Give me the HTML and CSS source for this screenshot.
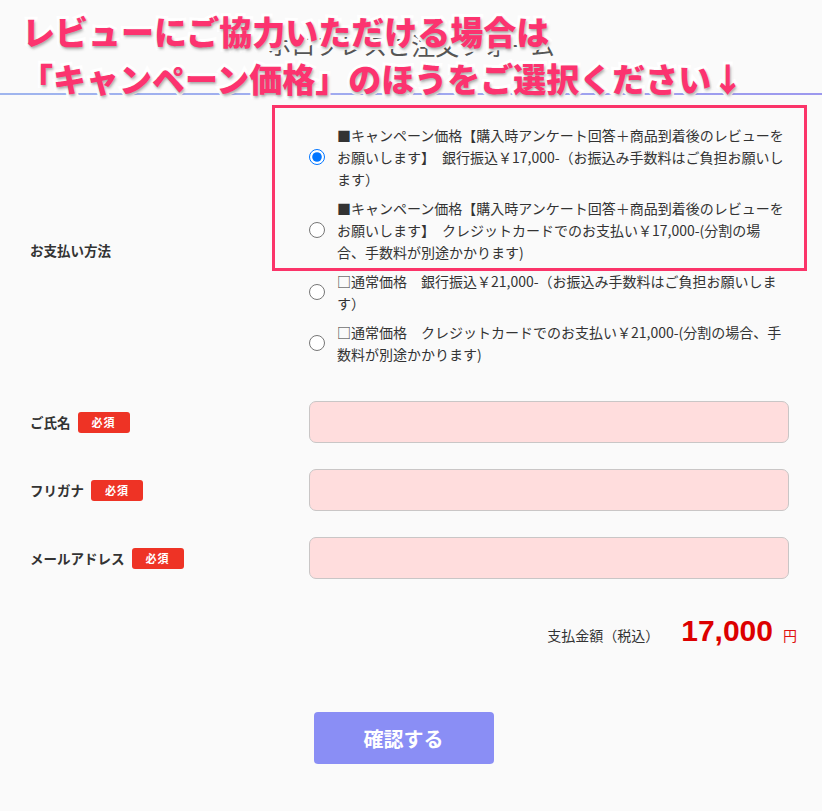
FILE: index.html
```html
<!DOCTYPE html>
<html lang="ja">
<head>
<meta charset="utf-8">
<title>ご注文フォーム</title>
<link rel="stylesheet" href="styles.css">
</head>
<body>
<div class="page">
  <header class="header">
    <h1 class="title">ホロフレスご注文フォーム</h1>
  </header>
  <div class="rule"></div>

  <form class="form">
    <div class="row row-pay">
      <div class="label label-pay">お支払い方法</div>
      <div class="options">
        <label class="opt"><input type="radio" name="pay" checked><span class="opt-text">■キャンペーン価格【購入時アンケート回答＋商品到着後のレビューをお願いします】　銀行振込￥17,000-（お振込み手数料はご負担お願いします）</span></label>
        <label class="opt"><input type="radio" name="pay"><span class="opt-text">■キャンペーン価格【購入時アンケート回答＋商品到着後のレビューをお願いします】　クレジットカードでのお支払い￥17,000-(分割の場合、手数料が別途かかります)</span></label>
        <label class="opt"><input type="radio" name="pay"><span class="opt-text">□通常価格　銀行振込￥21,000-（お振込み手数料はご負担お願いします）</span></label>
        <label class="opt"><input type="radio" name="pay"><span class="opt-text">□通常価格　クレジットカードでのお支払い￥21,000-(分割の場合、手数料が別途かかります)</span></label>
      </div>
    </div>

    <div class="row">
      <div class="label">ご氏名<span class="req">必須</span></div>
      <input class="field" type="text">
    </div>
    <div class="row">
      <div class="label">フリガナ<span class="req">必須</span></div>
      <input class="field" type="text">
    </div>
    <div class="row">
      <div class="label">メールアドレス<span class="req">必須</span></div>
      <input class="field" type="email">
    </div>

    <div class="total">
      <span class="total-label">支払金額（税込）</span>
      <span class="amount">17,000</span>
      <span class="yen">円</span>
    </div>

    <div class="actions">
      <button type="button" class="submit">確認する</button>
    </div>
  </form>

  <div class="highlight"></div>
  <div class="notice">
    <p class="notice-line notice-line1">レビューにご協力いただける場合は</p>
    <p class="notice-line notice-line2">「キャンペーン価格」のほうをご選択ください↓</p>
  </div>
</div>
</body>
</html>
```

FILE: styles.css
```css
* { box-sizing: border-box; }

html, body {
  margin: 0;
  padding: 0;
  background: #fafafa;
}

body {
  font-family: "Noto Sans CJK JP", "Noto Sans", sans-serif;
  color: #333;
}

.page {
  position: relative;
  width: 822px;
  min-height: 811px;
}

.header {
  height: 93px;
  padding-top: 30px;
}

.title {
  margin: 0;
  text-align: center;
  font-size: 24px;
  line-height: 30px;
  font-weight: 400;
  color: #555;
}

.rule {
  height: 2px;
  background: linear-gradient(90deg, #9fb5ee 0%, #a0a6f0 60%, #9c98ee 100%);
}

.form {
  padding: 29px 25px 0 30px;
}

.row {
  display: grid;
  grid-template-columns: 279px 480px;
  align-items: center;
  margin-bottom: 26px;
}

.row-pay {
  margin-bottom: 36px;
}

.label {
  display: flex;
  align-items: center;
  gap: 7px;
  font-size: 13.5px;
  font-weight: 700;
  color: #333;
  line-height: 20px;
}

.label-pay {
  padding-top: 11px;
}

.req {
  display: inline-flex;
  align-items: center;
  justify-content: center;
  width: 52px;
  height: 21px;
  border-radius: 3px;
  background: #ee3325;
  color: #fff;
  font-size: 11px;
  font-weight: 700;
  letter-spacing: 1px;
}

.options {
  display: flex;
  flex-direction: column;
  gap: 7px;
}

.opt {
  display: flex;
  align-items: center;
  gap: 12px;
  cursor: pointer;
}

.opt input {
  width: 16px;
  height: 16px;
  margin: 0;
  flex: none;
}

.opt-text {
  width: 448px;
  font-size: 14px;
  line-height: 22px;
  color: #333;
  line-break: strict;
}

.field {
  display: block;
  width: 480px;
  height: 42px;
  margin: 0;
  border: 1px solid #c9c6c6;
  border-radius: 7px;
  background: #ffdddd;
  font: inherit;
}

.total {
  display: flex;
  justify-content: flex-end;
  align-items: baseline;
  margin-top: 35px;
  height: 36px;
}

.total-label {
  font-size: 14px;
  color: #333;
}

.amount {
  margin-left: 22px;
  font-family: "Liberation Sans", "Noto Sans", sans-serif;
  font-size: 30px;
  font-weight: 700;
  color: #dc0000;
}

.yen {
  margin-left: 10px;
  font-size: 14px;
  color: #e01010;
}

.actions {
  display: flex;
  justify-content: center;
  padding-right: 20px;
  margin-top: 62px;
}

.submit {
  width: 180px;
  height: 52px;
  border: none;
  border-radius: 4px;
  background: #8a8ef5;
  color: #fff;
  font-family: inherit;
  font-size: 20px;
  font-weight: 700;
  cursor: pointer;
}

.highlight {
  position: absolute;
  left: 272px;
  top: 105px;
  width: 535px;
  height: 166px;
  border: 3px solid #fb3469;
  pointer-events: none;
}

.notice {
  position: absolute;
  left: 20px;
  top: 8px;
  pointer-events: none;
}

.notice-line {
  margin: 0;
  font-size: 33px;
  line-height: 47px;
  font-weight: 900;
  color: #fc336f;
  white-space: nowrap;
  -webkit-text-stroke: 6px #fff;
  paint-order: stroke fill;
  text-shadow: 1px 2px 3px rgba(0, 0, 0, 0.35);
}

.notice-line1 {
  padding-left: 2px;
}
```
